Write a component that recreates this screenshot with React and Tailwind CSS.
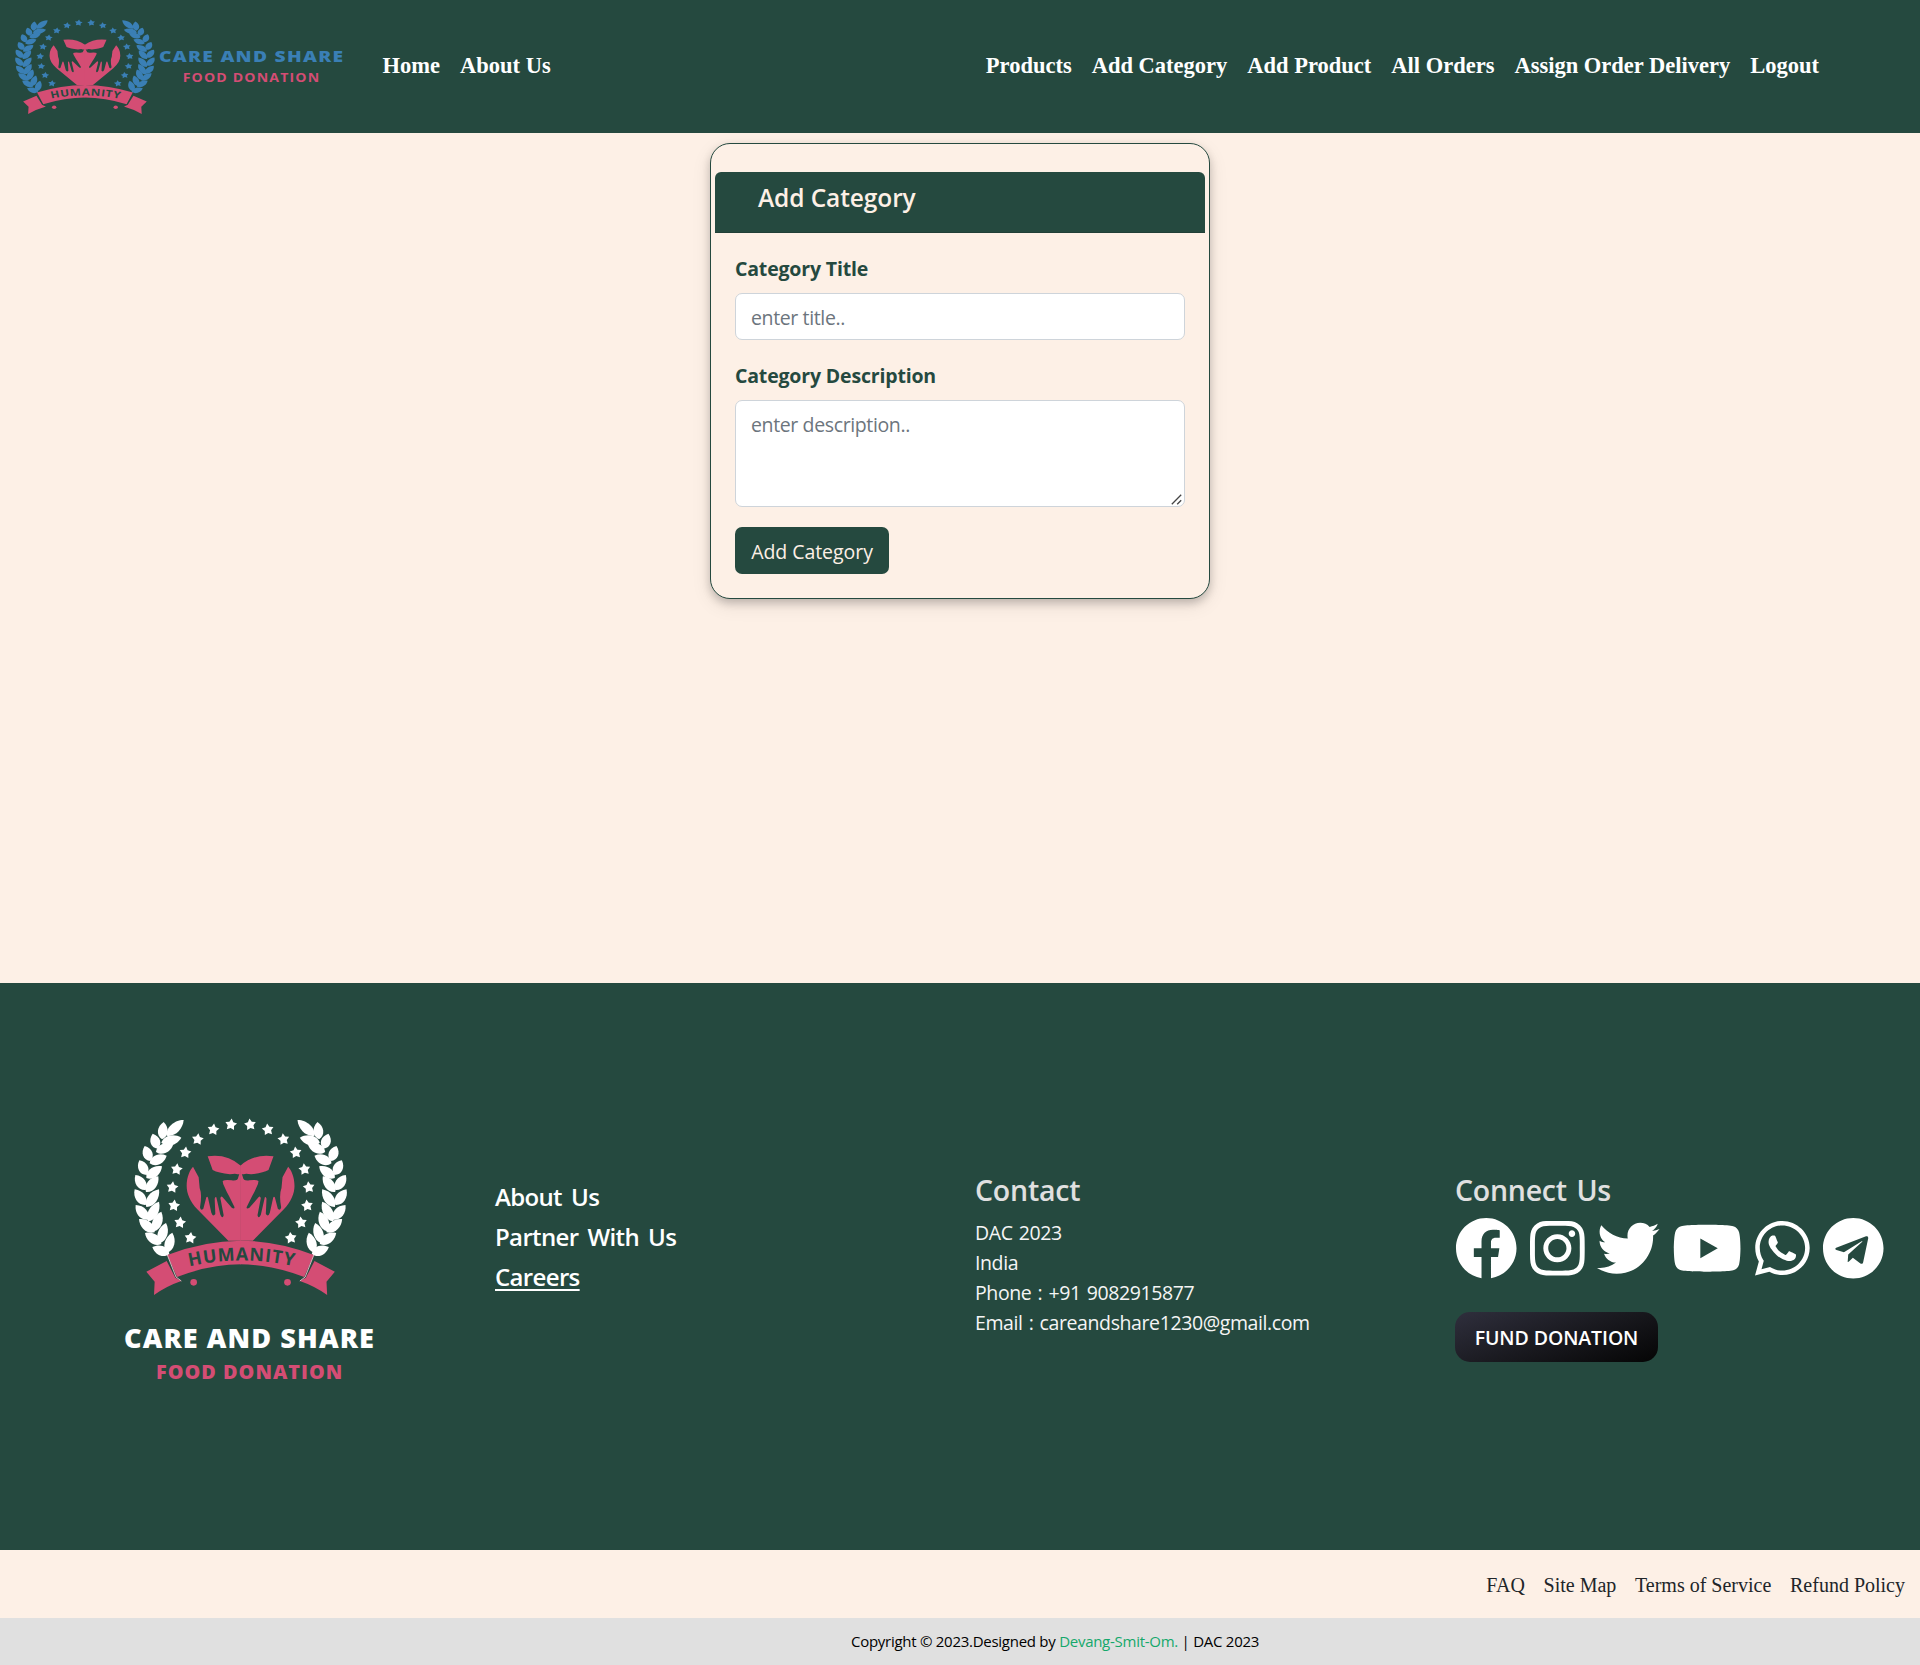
import React from "react";
import {
  FaFacebook,
  FaInstagram,
  FaTwitter,
  FaYoutube,
  FaWhatsapp,
  FaTelegram,
} from "react-icons/fa";

const PINK = "#d44d74";
const GREEN = "#25493f";

// Laurel leaves of the left branch: [baseX, baseY, tipX, tipY]
const LEAVES = [
  [170, 107, 221, 60],
  [156, 118, 161, 66], [154, 128, 214, 113],
  [143, 146, 128, 101], [138, 156, 190, 133],
  [121, 183, 104, 138], [119, 190, 170, 167],
  [110, 225, 88, 181], [109, 234, 156, 199],
  [107, 270, 76, 225], [108, 276, 145, 229],
  [107, 315, 74, 268], [109, 321, 147, 268],
  [115, 359, 77, 315], [114, 364, 147, 305],
  [134, 397, 87, 357], [131, 394, 154, 335],
  [154, 432, 105, 399], [149, 429, 168, 369],
  [178, 462, 127, 441], [171, 458, 187, 398],
];

const STARS = [
  [241, 414], [210, 368], [192, 317], [187, 262], [200, 208],
  [226, 158], [263, 118], [310, 89], [363, 74],
];

function leafPath([bx, by, tx, ty]) {
  const dx = tx - bx;
  const dy = ty - by;
  const len = Math.hypot(dx, dy);
  const nx = (-dy / len) * 19.5;
  const ny = (dx / len) * 19.5;
  const p = (f, s) => `${bx + dx * f + nx * s} ${by + dy * f + ny * s}`;
  return `M${bx} ${by}C${p(0.2, 1)} ${p(0.7, 1)} ${tx} ${ty}C${p(0.7, -1)} ${p(0.2, -1)} ${bx} ${by}Z`;
}

function starPoints([cx, cy]) {
  return Array.from({ length: 10 }, (_, i) => {
    const r = i % 2 ? 10 : 18.5;
    const a = (Math.PI * i) / 5 - Math.PI / 2 + 0.12;
    return `${cx + r * Math.cos(a)},${cy + r * Math.sin(a)}`;
  }).join(" ");
}

function EmblemHalf({ accent, seam }) {
  return (
    <g>
      {LEAVES.map((l, i) => (
        <path key={i} d={leafPath(l)} fill={accent} />
      ))}
      {STARS.map((s, i) => (
        <polygon key={i} points={starPoints(s)} fill={accent} />
      ))}
      <path
        fill={PINK}
        d="M392.5 222H388L385 231Q384 244 365 241Q345 238 338 243Q338 252 345 264Q350 276 357 288L373 320Q376 328 366 324L338 292Q334 286 331 294L341 346Q338 358 331 344L319 292Q316 288 314 296L316 342Q309 352 304 338L294 293Q292 288 289 292L280 326Q272 334 270 322Q277 285 269 264L266 232L249 200C240 210 230 230 230 258C230 280 240 305 262 328L355 422H392.5Z"
      />
      <path fill={PINK} d="M293 169Q350 160 392.5 197V223H382Q378 219 360 223Q325 219 308 210Z" />
      <path fill={PINK} d="M109 515L170 483L196 533L214 543Q170 558 132 585L134 545Z" />
      <path fill={PINK} d="M172 465Q282 422 393 422V493Q300 493 201 531Z" />
      <path d="M172 465L198 531L214 543" fill="none" stroke={seam} strokeWidth="2.5" />
      <circle cx="251" cy="547" r="10" fill={PINK} />
    </g>
  );
}

function Emblem({ accent, seam, id, transform }) {
  return (
    <g transform={transform}>
      <EmblemHalf accent={accent} seam={seam} />
      <g transform="translate(783.5 0) scale(-1 1)">
        <EmblemHalf accent={accent} seam={seam} />
      </g>
      <path id={id} d="M238 499Q392 464 552 499" fill="none" />
      <text
        fill={GREEN}
        fontFamily="'Open Sans', sans-serif"
        fontSize="54"
        fontWeight="700"
        textLength="315"
        lengthAdjust="spacing"
      >
        <textPath href={`#${id}`}>HUMANITY</textPath>
      </text>
    </g>
  );
}

function LogoText({ x, y, size, width, fill, weight = 800, children }) {
  return (
    <text
      x={x}
      y={y}
      fill={fill}
      fontFamily="'Open Sans', sans-serif"
      fontSize={size}
      fontWeight={weight}
      textLength={width}
      lengthAdjust="spacingAndGlyphs"
      letterSpacing="3"
    >
      {children}
    </text>
  );
}

function NavLogo() {
  return (
    <svg className="h-[133px] w-[360px] shrink-0" viewBox="0 0 1080 399">
      <Emblem
        id="nav-ribbon"
        accent="#3a7fb5"
        seam={GREEN}
        transform="translate(-2.2 29) scale(0.656 0.535)"
      />
      <LogoText x="477" y="186" size="45" width="556" fill="#3a7fb5">
        CARE AND SHARE
      </LogoText>
      <LogoText x="548" y="246" size="37" width="413" fill={PINK} weight={700}>
        FOOD DONATION
      </LogoText>
    </svg>
  );
}

function FooterLogo() {
  return (
    <svg className="mt-[117px] ml-[110px] h-[300px] w-[290px]" viewBox="0 0 870 900">
      <Emblem id="footer-ribbon" accent="#ffffff" seam="#f3c9d5" />
      <LogoText x="42" y="743" size="77" width="753" fill="#ffffff">
        CARE AND SHARE
      </LogoText>
      <LogoText x="138" y="838" size="58" width="562" fill={PINK}>
        FOOD DONATION
      </LogoText>
    </svg>
  );
}

const ADMIN_LINKS = [
  "Products",
  "Add Category",
  "Add Product",
  "All Orders",
  "Assign Order Delivery",
  "Logout",
];

function Navbar() {
  return (
    <nav className="flex h-[133px] items-center bg-[#25493f] pr-[101px] font-['Liberation_Serif',serif] text-[22.5px] leading-[30px] font-bold whitespace-nowrap text-white">
      <NavLogo />
      <div className="ml-[22.5px] flex gap-5 pb-0.5">
        <a>Home</a>
        <a>About Us</a>
      </div>
      <div className="ml-auto flex gap-5 pb-0.5">
        {ADMIN_LINKS.map((l) => (
          <a key={l}>{l}</a>
        ))}
      </div>
    </nav>
  );
}

function CategoryCard() {
  return (
    <div className="mx-auto h-[456px] w-[500px] rounded-[20px] border border-[#25493f] bg-[#fdf0e6] pt-7 shadow-[0_4px_8px_0_rgba(0,0,0,0.2),0_6px_20px_0_rgba(0,0,0,0.09)]">
      <div className="mx-1 h-[61px] rounded-t-[6px] border-b border-[#213f37] bg-[#25493f] pt-[11px] pl-[43px]">
        <h3 className="text-[24.5px] leading-[30px] font-semibold tracking-[-0.1px] text-[#fdf0e6]">
          Add Category
        </h3>
      </div>
      <form className="px-6 pt-[21px] text-[19.5px] leading-[30px]">
        <label className="mb-[9px] block font-bold tracking-[-0.17px] text-[#25493f]">
          Category Title
        </label>
        <input
          className="mb-[21px] block h-[47px] w-full rounded-[7px] border border-[#ced4da] bg-white px-[15px] pt-[1px] tracking-[-0.37px] placeholder:text-[#6c757d]"
          placeholder="enter title.."
        />
        <label className="mb-[9px] block font-bold tracking-[-0.17px] text-[#25493f]">
          Category Description
        </label>
        <div className="relative mb-5 h-[107px]">
          <textarea
            className="block h-[107px] w-full resize-none rounded-[7px] border border-[#ced4da] bg-white px-[15px] pt-[9px] pb-2 tracking-[-0.37px] placeholder:text-[#6c757d]"
            placeholder="enter description.."
          />
          <svg className="absolute right-[3px] bottom-[2px] h-[11px] w-[11px]" viewBox="0 0 11 11">
            <path d="M0.8 10.2L10.2 0.8M6.2 10.2L10.2 6.2" stroke="#444444" strokeWidth="1.3" />
          </svg>
        </div>
        <button
          type="button"
          className="flex h-[47px] w-[154px] items-center justify-center rounded-[7px] bg-[#25493f] pt-[2px] tracking-[-0.05px] whitespace-nowrap text-[#fdf0e6]"
        >
          Add Category
        </button>
      </form>
    </div>
  );
}

function Socials() {
  return (
    <div className="flex items-center gap-[12.5px] text-white">
      <FaFacebook className="h-[62.5px] w-[62.5px] shrink-0" />
      <FaInstagram className="h-[62.5px] w-[54.7px] shrink-0" />
      <FaTwitter className="h-[62.5px] w-[62.5px] shrink-0" />
      <FaYoutube className="h-[62.5px] w-[70.3px] shrink-0" />
      <FaWhatsapp className="h-[62.5px] w-[54.7px] shrink-0" />
      <FaTelegram className="h-[62.5px] w-[62.5px] shrink-0" />
    </div>
  );
}

function Footer() {
  return (
    <footer>
      <div className="grid h-[567px] grid-cols-4 bg-[#25493f] whitespace-nowrap">
        <FooterLogo />
        <div className="pt-[194px] pl-[15px] text-[24px] leading-10 font-semibold tracking-[-0.65px] text-white [word-spacing:3.5px]">
          <div>About Us</div>
          <div>Partner With Us</div>
          <div className="underline decoration-2 underline-offset-[3px]">Careers</div>
        </div>
        <div className="pt-[189px] pl-[15px]">
          <h3 className="text-[28.5px] leading-[36px] font-semibold tracking-[-0.2px] text-[#e0e0e0]">
            Contact
          </h3>
          <div className="mt-[10px] text-[19.5px] leading-[30px] tracking-[-0.4px] text-[#f5f5f5] [word-spacing:1.5px]">
            <div>DAC 2023</div>
            <div>India</div>
            <div>Phone : +91 9082915877</div>
            <div>Email : careandshare1230@gmail.com</div>
          </div>
        </div>
        <div className="pt-[189px] pl-[15px]">
          <h3 className="text-[28.5px] leading-[36px] font-semibold tracking-[-0.25px] text-[#e0e0e0] [word-spacing:2.5px]">
            Connect Us
          </h3>
          <div className="mt-[9px]">
            <Socials />
          </div>
          <button className="mt-8 flex h-[50px] w-[203px] items-center justify-center rounded-[15px] bg-[linear-gradient(160deg,#2f2f3d_0%,#1a1a20_50%,#050505_100%)] pt-[2px] text-[19.5px] font-semibold tracking-[-0.1px] text-white">
            FUND DONATION
          </button>
        </div>
      </div>
      <div className="flex h-[68px] items-center justify-end gap-[18.7px] bg-[#fdf0e6] pt-px pr-[15px] font-['Liberation_Serif',serif] text-[20px] leading-[30px] text-[#212529]">
        <a>FAQ</a>
        <a>Site Map</a>
        <a>Terms of Service</a>
        <a>Refund Policy</a>
      </div>
      <div className="flex h-[47px] bg-[#e0e0e0] pt-[9px] pl-[851px] text-[15px] leading-[28px] tracking-[-0.27px] whitespace-pre text-black">
        Copyright © 2023.Designed by <span className="text-[#15a86b]">Devang-Smit-Om.</span> | DAC 2023
      </div>
    </footer>
  );
}

export default function App() {
  return (
    <div className="w-[1920px] bg-[#fdf0e6] font-['Open_Sans','Noto_Sans',sans-serif]">
      <Navbar />
      <main className="h-[850px] pt-2.5">
        <CategoryCard />
      </main>
      <Footer />
    </div>
  );
}
